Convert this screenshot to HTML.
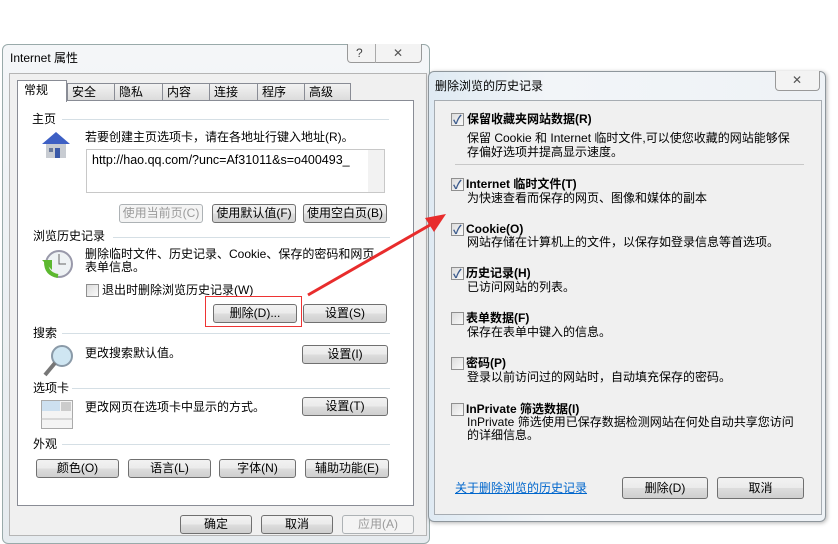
<!DOCTYPE html>
<html><head><meta charset="utf-8"><style>
*{margin:0;padding:0;box-sizing:border-box}
body{width:838px;height:536px;background:#fff;position:relative;overflow:hidden;font-family:"Liberation Sans","Noto Sans CJK SC",sans-serif;font-size:12px;color:#000}
.a{position:absolute;white-space:nowrap;line-height:14px}
.btn{position:absolute;height:19px;border:1px solid #707070;border-radius:3px;background:linear-gradient(#f2f2f2,#ebebeb 50%,#dddddd 51%,#cfcfcf);text-align:center;line-height:17px;font-size:12px}
.dis{color:#9a9a9a;border-color:#adb2b5;background:#f4f4f4}
.line{position:absolute;height:1px;background:#d5dfe5}
.cb{position:absolute;width:13px;height:13px;border:1px solid #8f8f8f;background:linear-gradient(135deg,#dcdcdc,#fafafa)}
.ck::after{content:"✓";position:absolute;left:1px;top:-3px;font-size:12px;color:#3b5a8c;font-weight:bold}
.b{font-weight:bold}
</style></head><body>
<!-- left dialog frame -->
<div style="position:absolute;left:2px;top:44px;width:428px;height:500px;border:1px solid #9aa;border-radius:6px;background:linear-gradient(#f4f6f8,#e6ebef)"></div>
<div class="a" style="left:10px;top:51px;font-size:12px">Internet 属性</div>
<div style="position:absolute;left:347px;top:44px;width:75px;height:19px;border:1px solid #999;border-top:none;border-radius:0 0 4px 4px;background:#f3f3f3"></div>
<div style="position:absolute;left:375px;top:44px;width:1px;height:19px;background:#aaa"></div>
<div class="a" style="left:356px;top:46px;color:#444">?</div>
<div class="a" style="left:393px;top:46px;color:#555">✕</div>
<div style="position:absolute;left:9px;top:73px;width:418px;height:463px;background:#f0f0f0;border:1px solid #b5b5b5"></div>
<!-- tabs -->
<div style="position:absolute;left:17px;top:100px;width:397px;height:406px;background:#fff;border:1px solid #898c95"></div>
<div style="position:absolute;left:17px;top:80px;width:50px;height:22px;background:#fff;border:1px solid #898c95;border-bottom:none"></div>
<div class="a" style="left:24px;top:83px">常规</div>
<div style="position:absolute;left:67px;top:83px;width:284px;height:17px;display:flex">
<div style="flex:0 0 48px;border:1px solid #898c95;border-bottom:none;background:linear-gradient(#f2f2f2,#dcdcdc);padding-left:4px;line-height:16px">安全</div>
<div style="flex:0 0 48px;border:1px solid #898c95;border-bottom:none;border-left:none;background:linear-gradient(#f2f2f2,#dcdcdc);padding-left:4px;line-height:16px">隐私</div>
<div style="flex:0 0 47px;border:1px solid #898c95;border-bottom:none;border-left:none;background:linear-gradient(#f2f2f2,#dcdcdc);padding-left:4px;line-height:16px">内容</div>
<div style="flex:0 0 48px;border:1px solid #898c95;border-bottom:none;border-left:none;background:linear-gradient(#f2f2f2,#dcdcdc);padding-left:4px;line-height:16px">连接</div>
<div style="flex:0 0 47px;border:1px solid #898c95;border-bottom:none;border-left:none;background:linear-gradient(#f2f2f2,#dcdcdc);padding-left:4px;line-height:16px">程序</div>
<div style="flex:0 0 46px;border:1px solid #898c95;border-bottom:none;border-left:none;background:linear-gradient(#f2f2f2,#dcdcdc);padding-left:4px;line-height:16px">高级</div>
</div>
<!-- 主页 -->
<div class="a" style="left:32px;top:112px">主页</div>
<div class="line" style="left:62px;top:119px;width:327px"></div>
<svg style="position:absolute;left:40px;top:130px" width="32" height="30"><polygon points="16,2 30,14 26,14 26,28 6,28 6,14 2,14" fill="#3d5fc4"/><rect x="6" y="14" width="20" height="14" fill="#c8ccd2"/><rect x="15" y="18" width="5" height="10" fill="#3b5aa8"/><rect x="9" y="18" width="4" height="4" fill="#6a7a9a"/></svg>
<div class="a" style="left:85px;top:130px">若要创建主页选项卡，请在各地址行键入地址(R)。</div>
<div style="position:absolute;left:86px;top:149px;width:299px;height:44px;border:1px solid #c8c8c8;background:#fff"></div>
<div style="position:absolute;left:368px;top:150px;width:16px;height:42px;background:#f2f2f2"></div>
<div class="a" style="left:92px;top:153px;font-size:12.5px">http://hao.qq.com/?unc=Af31011&amp;s=o400493_</div>
<div class="btn dis" style="left:119px;top:204px;width:84px">使用当前页(C)</div>
<div class="btn" style="left:212px;top:204px;width:84px">使用默认值(F)</div>
<div class="btn" style="left:303px;top:204px;width:84px">使用空白页(B)</div>
<!-- history -->
<div class="a" style="left:33px;top:229px">浏览历史记录</div>
<div class="line" style="left:113px;top:237px;width:277px"></div>
<svg style="position:absolute;left:40px;top:248px" width="34" height="32"><circle cx="19" cy="16" r="13" fill="#eef2f4" stroke="#99a" stroke-width="2"/><path d="M19 6v10h7" stroke="#666" fill="none"/><path d="M2 12l10 0 0 10z" fill="#5cb82f"/><path d="M6 14q0 12 12 14" stroke="#5cb82f" stroke-width="4" fill="none"/></svg>
<div class="a" style="left:85px;top:248px;line-height:13px">删除临时文件、历史记录、Cookie、保存的密码和网页<br>表单信息。</div>
<div class="cb" style="left:86px;top:284px"></div>
<div class="a" style="left:102px;top:283px">退出时删除浏览历史记录(W)</div>
<div class="btn" style="left:213px;top:304px;width:84px">删除(D)...</div>
<div class="btn" style="left:303px;top:304px;width:84px">设置(S)</div>
<div style="position:absolute;left:205px;top:296px;width:97px;height:31px;border:1px solid #e33"></div>
<!-- search -->
<div class="a" style="left:33px;top:326px">搜索</div>
<div class="line" style="left:62px;top:333px;width:328px"></div>
<svg style="position:absolute;left:42px;top:344px" width="32" height="34"><circle cx="20" cy="12" r="10" fill="#cfe6f2" stroke="#8a9aa8" stroke-width="2"/><path d="M13 19L3 31" stroke="#777" stroke-width="4"/></svg>
<div class="a" style="left:85px;top:346px">更改搜索默认值。</div>
<div class="btn" style="left:302px;top:345px;width:86px">设置(I)</div>
<!-- tabs section -->
<div class="a" style="left:33px;top:381px">选项卡</div>
<div class="line" style="left:72px;top:388px;width:318px"></div>
<svg style="position:absolute;left:41px;top:400px" width="32" height="30"><rect x="0.5" y="0.5" width="31" height="28" fill="#f4f4f4" stroke="#aaa"/><rect x="1" y="1" width="18" height="10" fill="#cde0f0"/><rect x="20" y="2" width="10" height="9" fill="#ccc"/><line x1="0" y1="19" x2="32" y2="19" stroke="#bbb"/></svg>
<div class="a" style="left:85px;top:400px">更改网页在选项卡中显示的方式。</div>
<div class="btn" style="left:302px;top:397px;width:86px">设置(T)</div>
<!-- appearance -->
<div class="a" style="left:33px;top:437px">外观</div>
<div class="line" style="left:62px;top:444px;width:328px"></div>
<div class="btn" style="left:36px;top:459px;width:83px">颜色(O)</div>
<div class="btn" style="left:128px;top:459px;width:83px">语言(L)</div>
<div class="btn" style="left:219px;top:459px;width:77px">字体(N)</div>
<div class="btn" style="left:305px;top:459px;width:84px">辅助功能(E)</div>
<div class="btn" style="left:180px;top:515px;width:72px">确定</div>
<div class="btn" style="left:261px;top:515px;width:72px">取消</div>
<div class="btn dis" style="left:342px;top:515px;width:72px">应用(A)</div>
<!-- right dialog -->
<div style="position:absolute;left:428px;top:71px;width:398px;height:451px;border:1px solid #8e969c;border-radius:6px;background:linear-gradient(90deg,#dfeaf3,#f2f5f8 30%,#eef2f6);box-shadow:1px 1px 4px rgba(0,0,0,.3)"></div>
<div class="a" style="left:435px;top:79px;font-size:12px">删除浏览的历史记录</div>
<div style="position:absolute;left:775px;top:71px;width:45px;height:20px;border:1px solid #999;border-top:none;border-radius:0 0 4px 4px;background:#f3f3f3"></div>
<div class="a" style="left:792px;top:73px;color:#555">✕</div>
<div style="position:absolute;left:434px;top:100px;width:388px;height:415px;background:#f0f0f0;border:1px solid #a6acb2"></div>
<div class="cb ck" style="left:451px;top:113px"></div>
<div class="a b" style="left:467px;top:112px">保留收藏夹网站数据(R)</div>
<div class="a" style="left:467px;top:131px;line-height:14px">保留 Cookie 和 Internet 临时文件,可以使您收藏的网站能够保<br>存偏好选项并提高显示速度。</div>
<div style="position:absolute;left:455px;top:164px;width:349px;height:1px;background:#c8c8c8"></div>
<div class="cb ck" style="left:451px;top:178px"></div>
<div class="a b" style="left:466px;top:177px">Internet 临时文件(T)</div>
<div class="a" style="left:467px;top:191px">为快速查看而保存的网页、图像和媒体的副本</div>
<div class="cb ck" style="left:451px;top:223px"></div>
<div class="a b" style="left:466px;top:222px">Cookie(O)</div>
<div class="a" style="left:467px;top:235px">网站存储在计算机上的文件，以保存如登录信息等首选项。</div>
<div class="cb ck" style="left:451px;top:267px"></div>
<div class="a b" style="left:466px;top:266px">历史记录(H)</div>
<div class="a" style="left:467px;top:280px">已访问网站的列表。</div>
<div class="cb" style="left:451px;top:312px"></div>
<div class="a b" style="left:466px;top:311px">表单数据(F)</div>
<div class="a" style="left:467px;top:325px">保存在表单中键入的信息。</div>
<div class="cb" style="left:451px;top:357px"></div>
<div class="a b" style="left:466px;top:356px">密码(P)</div>
<div class="a" style="left:467px;top:370px">登录以前访问过的网站时，自动填充保存的密码。</div>
<div class="cb" style="left:451px;top:403px"></div>
<div class="a b" style="left:466px;top:402px">InPrivate 筛选数据(I)</div>
<div class="a" style="left:467px;top:416px;line-height:13px">InPrivate 筛选使用已保存数据检测网站在何处自动共享您访问<br>的详细信息。</div>
<div class="a" style="left:455px;top:481px;color:#0066cc;text-decoration:underline">关于删除浏览的历史记录</div>
<div class="btn" style="left:622px;top:477px;width:86px;height:22px;line-height:20px">删除(D)</div>
<div class="btn" style="left:717px;top:477px;width:87px;height:22px;line-height:20px">取消</div>
<!-- arrow -->
<svg style="position:absolute;left:0;top:0" width="838" height="536"><line x1="308" y1="295" x2="430" y2="225" stroke="#e82c2c" stroke-width="3"/><polygon points="446,214 425,218 434,232" fill="#e82c2c"/></svg>
</body></html>
